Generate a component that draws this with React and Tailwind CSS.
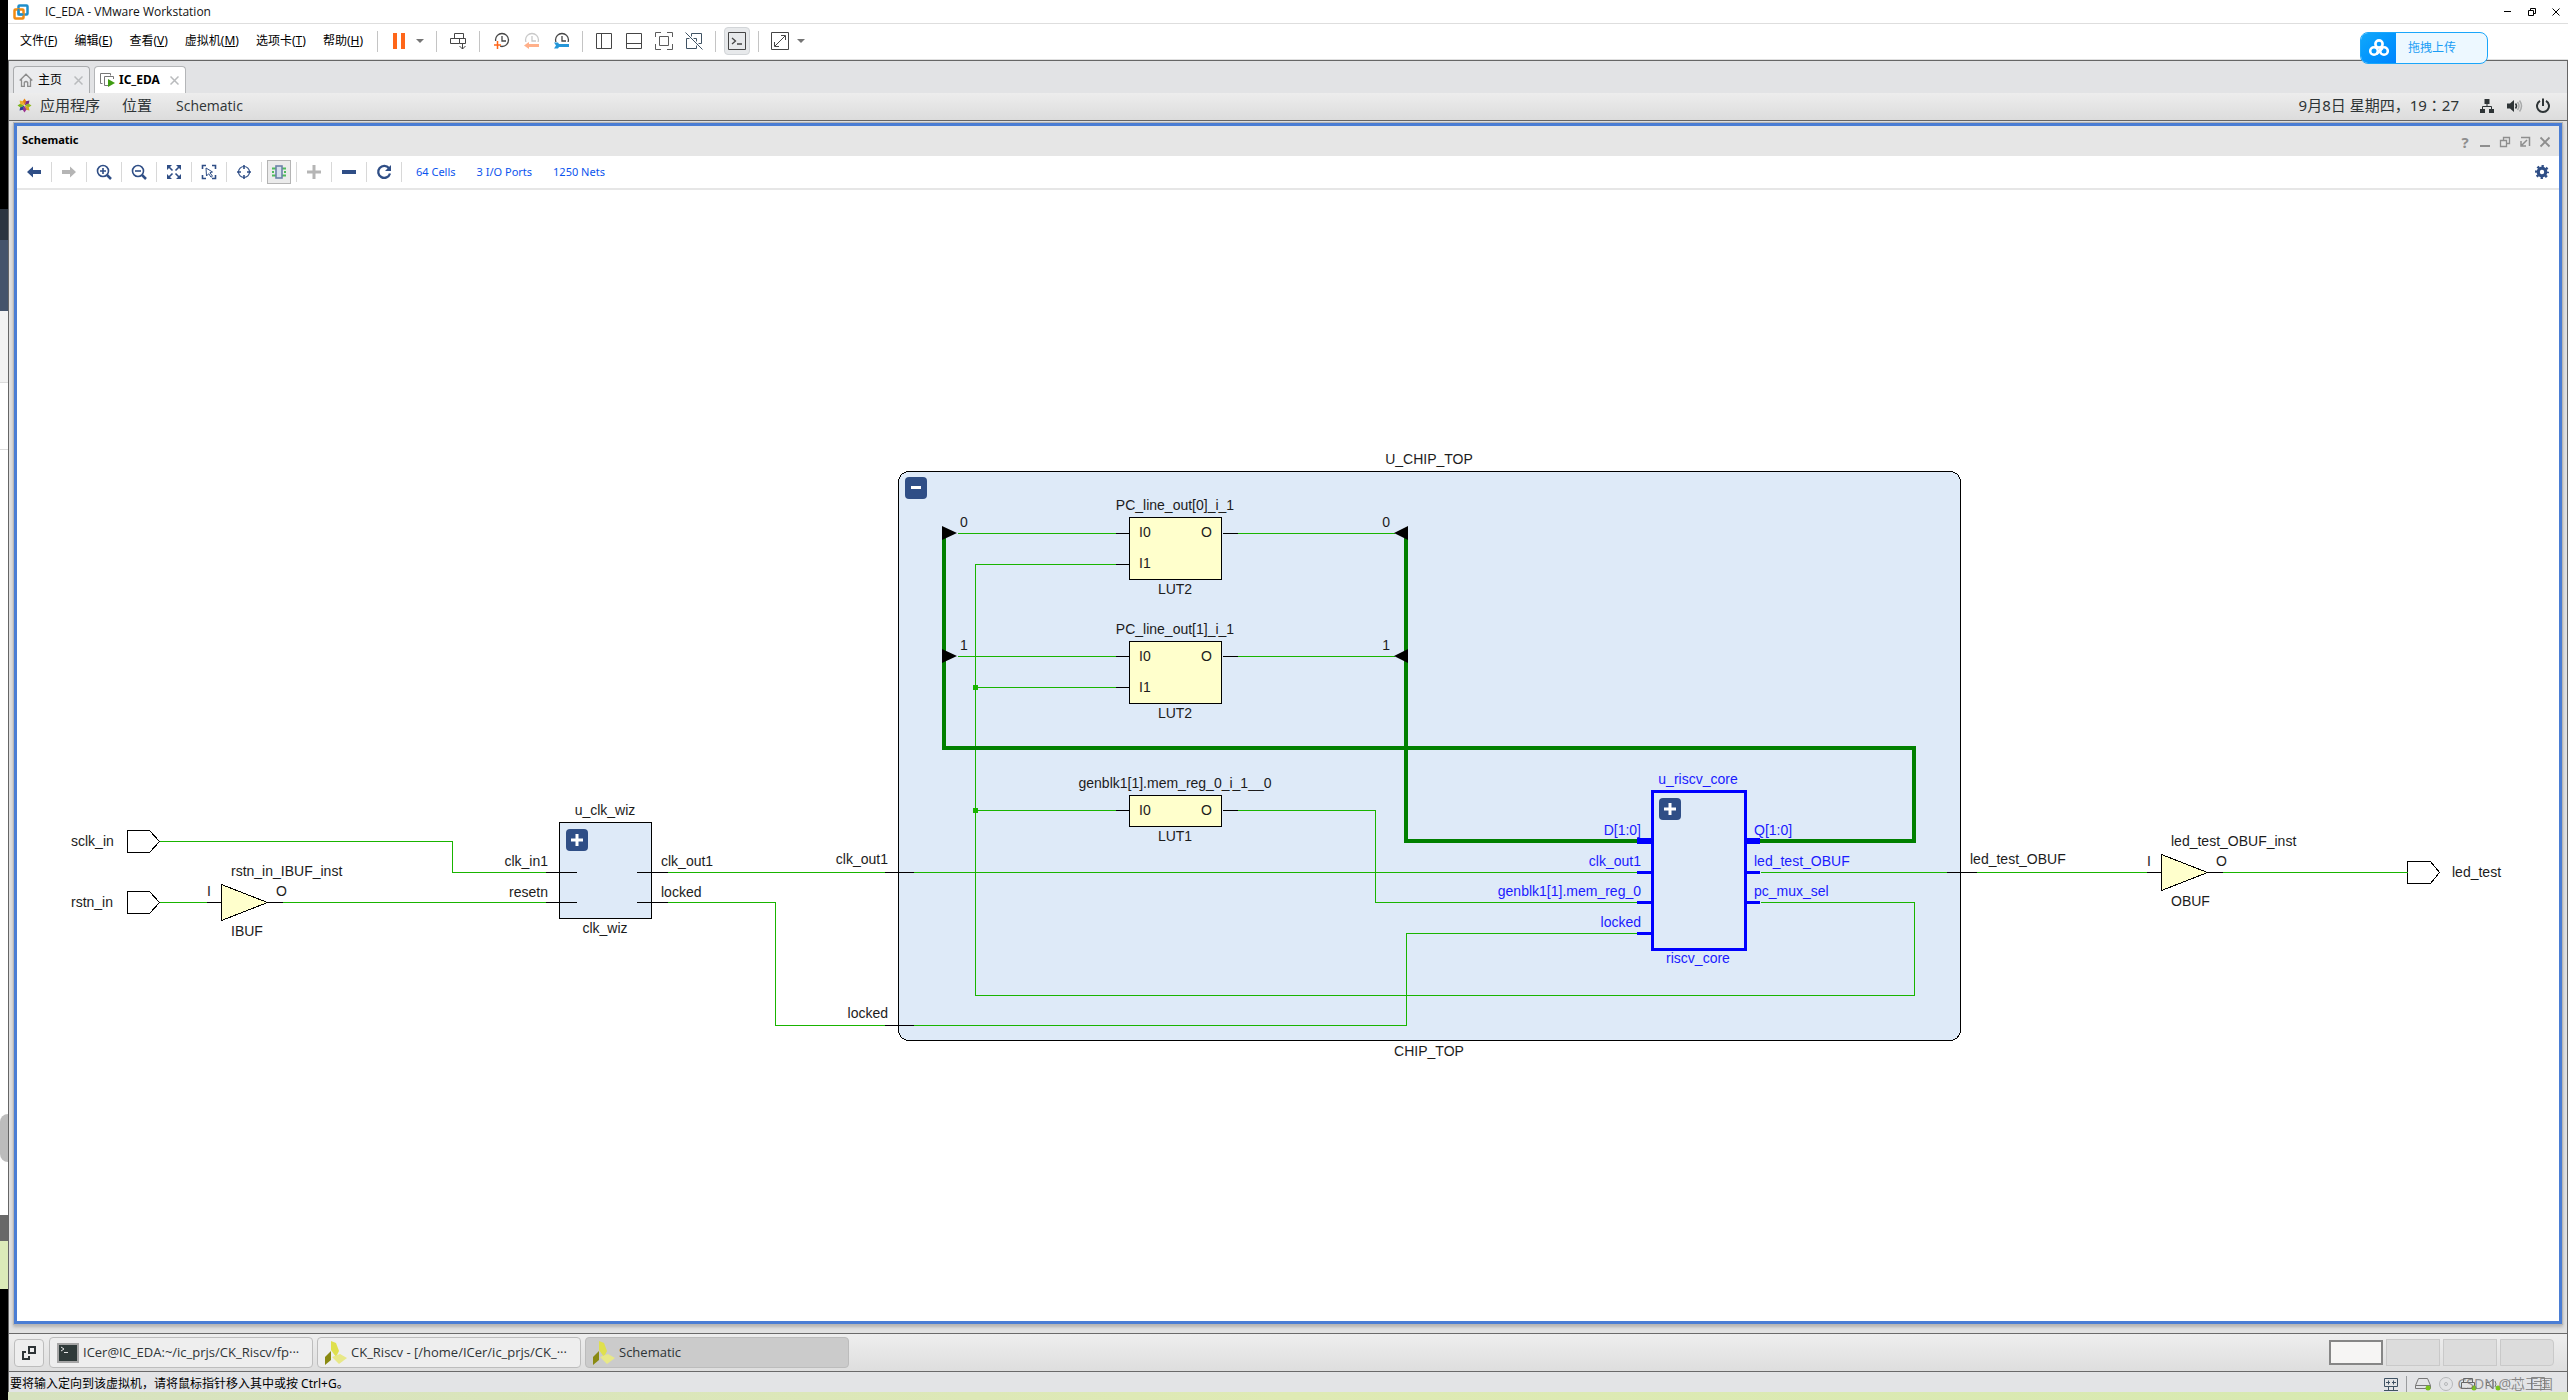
import React from "react";

const UI = "font-['Noto_Sans','Noto_Sans_CJK_SC',sans-serif]";
const NAVY = "#2f4e86";

/* ---------- VMware menu and toolbar ---------- */

const menus = [
  ["文件", "F"],
  ["编辑", "E"],
  ["查看", "V"],
  ["虚拟机", "M"],
  ["选项卡", "T"],
  ["帮助", "H"],
];

function Icon({ w = 18, h = 18, children, ...rest }) {
  return (
    <svg width={w} height={h} viewBox={`0 0 ${w} ${h}`} fill="none" stroke="#454545" className="shrink-0" aria-hidden="true" {...rest}>
      {children}
    </svg>
  );
}

function BarSep() {
  return <span className="mx-1.5 h-[21px] w-px shrink-0 bg-[#c4c4c4]" />;
}

function BarButton({ label, children, active }) {
  return (
    <button aria-label={label} className="flex h-8 w-[30px] shrink-0 items-center justify-center">
      <span className={active ? "flex h-7 w-[26px] items-center justify-center rounded border border-[#d2d5d8] bg-[#e7e9eb]" : "flex"}>
        {children}
      </span>
    </button>
  );
}

function Caret() {
  return (
    <button aria-label="展开" className="flex w-3 shrink-0 justify-center">
      <Icon w={8} h={4} stroke="none">
        <path d="M0 0h8L4 4z" fill="#757575" />
      </Icon>
    </button>
  );
}

function ClockFace({ color = "#454545" }) {
  return (
    <>
      <circle cx="10" cy="8" r="6.5" stroke={color} strokeWidth="1.3" />
      <path d="M10 4v5h4" stroke={color} strokeWidth="1.3" />
    </>
  );
}

function VmwareToolbar() {
  return (
    <>
      <BarSep />
      <BarButton label="挂起">
        <Icon w={12} h={16} stroke="none">
          <path d="M0 0h4v16H0zM8 0h4v16H8z" fill="#ff6619" />
        </Icon>
      </BarButton>
      <Caret />
      <span className="w-1" />
      <BarSep />
      <BarButton label="发送 Ctrl+Alt+Del">
        <Icon>
          <path d="M5.500 1.500h9v5h-9zM1.500 6.500h9v5h-9zM10.500 6.500h6v5h-6M13.500 11v6M10.500 14l3 3 3-3" />
        </Icon>
      </BarButton>
      <BarSep />
      <BarButton label="拍摄快照">
        <Icon>
          <ClockFace />
          <path d="M0 9h8v8H0z" fill="#fff" stroke="none" />
          <path d="M5.500 9v8M2 13h7" stroke="#ff6619" strokeWidth="1.500" />
        </Icon>
      </BarButton>
      <BarButton label="恢复快照">
        <Icon>
          <ClockFace color="#c9c9c9" />
          <path d="M1 10h17v8H1z" fill="#fff" stroke="none" />
          <path d="M17 13.500H5" stroke="#ffb08a" strokeWidth="3" />
          <path d="M7 10v7l-5-3.500z" fill="#ffb08a" stroke="none" />
        </Icon>
      </BarButton>
      <BarButton label="管理快照">
        <Icon>
          <ClockFace />
          <path d="M1 10h17v8H1z" fill="#fff" stroke="none" />
          <path d="M6 13.500h11" stroke="#2496d8" strokeWidth="3" />
          <path d="M2 10.500h4l2 3-2 3H2l2-3z" fill="#2496d8" stroke="none" />
        </Icon>
      </BarButton>
      <BarSep />
      <BarButton label="显示库">
        <Icon><path d="M1.500 1.500h15v15h-15zM6.500 1.500v15" /></Icon>
      </BarButton>
      <BarButton label="缩略图栏">
        <Icon><path d="M1.500 1.500h15v15h-15zM1.500 11.500h15" /></Icon>
      </BarButton>
      <BarButton label="全屏">
        <Icon stroke="#5c5c5c"><path d="M4.500 4.500h9v9h-9zM.5 5V.5H6M12 .5h5.500V5M17.500 12v5.500H12M6 17.500H.5V12" /></Icon>
      </BarButton>
      <BarButton label="Unity">
        <Icon stroke="#3f5263">
          <path d="M6.500 6V1.500h10v10H12M1.500 6.500h10v10h-10z" />
          <path d="M.5 .5l17 17" stroke="#fff" strokeWidth="3" />
          <path d="M.5 .5l17 17" />
        </Icon>
      </BarButton>
      <BarSep />
      <BarButton label="控制台" active>
        <Icon><path d="M.5 .5h17v17H.5z" /><path d="M4 6l3.500 3L4 12M9 12h5" strokeWidth="1.300" /></Icon>
      </BarButton>
      <BarSep />
      <BarButton label="拉伸">
        <Icon><path d="M.5 .5h17v17H.5zM10 3.500h4.500V8M8 14.500H3.500V10M4 14L14 4" /></Icon>
      </BarButton>
      <Caret />
    </>
  );
}

function TitleBar() {
  return (
    <header className="flex h-6 items-center border-b border-[#dedede] bg-white pl-[5px] pr-2 text-xs text-[#111]">
      <Icon w={16} h={16}>
        <rect x="5.500" y="1.500" width="9" height="9" rx="1" stroke="#1f8ecb" strokeWidth="2.500" />
        <rect x="1.500" y="5.500" width="9" height="9" rx="1" stroke="#f28b12" strokeWidth="2.500" />
        <path d="M5.500 5v5.500h5" stroke="#1f8ecb" strokeWidth="2" />
      </Icon>
      <h1 className="ml-4 font-['Open_Sans',sans-serif]">IC_EDA - VMware Workstation</h1>
      <div className="ml-auto flex gap-4">
        <button aria-label="最小化"><Icon w={8} h={8} stroke="#000"><path d="M0 3.500h7" /></Icon></button>
        <button aria-label="还原"><Icon w={8} h={8} stroke="#000"><path d="M.5 2.500h5v5h-5zM2.500 2V.5h5v5H6" /></Icon></button>
        <button aria-label="关闭"><Icon w={8} h={8} stroke="#000"><path d="M.5 .5l7 7M7.500 .5l-7 7" /></Icon></button>
      </div>
    </header>
  );
}

function UploadWidget() {
  return (
    <button className="absolute right-20 top-2 flex h-8 w-32 overflow-hidden rounded-lg border border-[#1aa6fa] bg-[#edf8ff] text-xs text-[#1a9df5]">
      <span className="flex h-full w-[35px] items-center justify-center bg-linear-to-br from-[#12a8fb] to-[#0084ff]">
        <Icon w={20} h={18} stroke="#fff" strokeWidth="2.600">
          <circle cx="10" cy="5" r="3.600" />
          <circle cx="5" cy="12" r="3.800" />
          <circle cx="15" cy="12" r="3.800" />
          <path d="M7.500 15l6-6" />
        </Icon>
      </span>
      <span className="ml-3 self-center">拖拽上传</span>
    </button>
  );
}

function TabClose() {
  return (
    <button aria-label="关闭选项卡" className="ml-auto">
      <Icon w={9} h={9} stroke="#b9bbbd" strokeWidth="1.500"><path d="M.5 .5l8 8M8.500 .5l-8 8" /></Icon>
    </button>
  );
}

function VmTabs() {
  return (
    <nav className="flex h-8 items-end gap-1 bg-[#e2e3e5] pl-1 text-xs text-black">
      <div className="flex h-[27px] w-[77px] items-center rounded-t border border-b-0 border-[#a9abad] bg-[#ebecee] pl-[5px] pr-1.5">
        <Icon w={14} h={14} stroke="#8c8c8c" strokeWidth="1.300">
          <path d="M.7 7.500L7 1.200l6.300 6.300M2.500 6v7.300h2.800V9.500q1.700-2 3.400 0v3.800h2.800V6" />
        </Icon>
        <button className="ml-[5px]">主页</button>
        <TabClose />
      </div>
      <div className="flex h-[27px] w-[92px] items-center rounded-t border border-b-0 border-[#b4b6b8] bg-white pl-[5px] pr-1.5">
        <Icon w={15} h={14} stroke="#777">
          <path d="M2.500 10.500h-2V.5h10v2M9 12.500H4.500v-9h9V6" />
          <path d="M8 6l7 4-7 4z" fill="#3f9c12" stroke="none" />
        </Icon>
        <button className="ml-1 font-bold">IC_EDA</button>
        <TabClose />
      </div>
    </nav>
  );
}

/* ---------- GNOME panel ---------- */

const petals = ["#e8820e", "#7a2a85", "#93b922", "#d6a51f", "#9a3090", "#2d3f92", "#7ab51d", "#edae2f"];

function GnomePanel() {
  return (
    <div className="flex h-[27px] items-center bg-linear-to-b from-[#ededed] to-[#dcdcdc] pb-0.5 pl-2 pr-4 text-[15px] text-[#2e3436]">
      <Icon w={15} h={15} stroke="none">
        {petals.map((c, i) => (
          <path key={c} d="M7.500 7L5.500 3.500 7.500 .5l2 3z" fill={c} transform={`rotate(${i * 45} 7.500 7.500)`} />
        ))}
      </Icon>
      <button className="ml-2">应用程序</button>
      <button className="ml-[22px]">位置</button>
      <button className="ml-6 font-['Open_Sans',sans-serif] text-sm">Schematic</button>
      <time className="ml-auto font-['Noto_Sans','Noto_Sans_CJK_JP',sans-serif]">9月8日 星期四，19：27</time>
      <div className="ml-5 flex gap-3">
        <button aria-label="网络">
          <Icon w={16} h={16} stroke="#2e3436">
            <path d="M5.500 1h5v5h-5zM1 11h5v4H1zM10 11h5v4h-5z" fill="#2e3436" stroke="none" />
            <path d="M8 6v2.500M3.500 11V8.500h9V11" />
          </Icon>
        </button>
        <button aria-label="音量">
          <Icon w={16} h={16} stroke="#2e3436">
            <path d="M0 5.500h3L7 2v12l-4-3.500H0z" fill="#2e3436" stroke="none" />
            <path d="M8.500 5.500q2 2.500 0 5" strokeWidth="1.500" />
            <path d="M10.500 4q3 4 0 8M12.500 2.500q4 5.500 0 11" stroke="#a8aaaa" strokeWidth="1.500" />
          </Icon>
        </button>
        <button aria-label="电源">
          <Icon w={16} h={16} stroke="#2e3436" strokeWidth="2">
            <path d="M5 2.800a6 6 0 1 0 6 0M8 .5V8" />
          </Icon>
        </button>
      </div>
    </div>
  );
}

/* ---------- Schematic window ---------- */

function ToolCell({ label, children, active }) {
  return (
    <button aria-label={label} className="flex h-5 w-[35px] items-center justify-center border-r border-[#d8d8d8]">
      <span className={active ? "flex h-6 w-6 shrink-0 items-center justify-center border border-[#b4b4b4] bg-[#ebebeb]" : "flex"}>
        <Icon w={16} h={16} stroke={NAVY} strokeWidth="1.600">{children}</Icon>
      </span>
    </button>
  );
}

function SchematicToolbar() {
  return (
    <div className="flex h-[34px] items-center border-b-2 border-[#e6e6e6] bg-white pr-2.5 text-[11px] text-[#0a54ee]">
      <ToolCell label="Back"><path d="M1 8l6-5.500v3.500h8v4H7v3.500z" fill={NAVY} stroke="none" /></ToolCell>
      <ToolCell label="Forward"><path d="M15 8L9 2.500V6H1v4h8v3.500z" fill="#b5b5b5" stroke="none" /></ToolCell>
      <ToolCell label="Zoom in">
        <circle cx="7" cy="7" r="5.500" /><path d="M4 7h6M7 4v6" /><path d="M11 11l4 4" strokeWidth="2.500" />
      </ToolCell>
      <ToolCell label="Zoom out">
        <circle cx="7" cy="7" r="5.500" /><path d="M4 7h6" /><path d="M11 11l4 4" strokeWidth="2.500" />
      </ToolCell>
      <ToolCell label="Zoom fit">
        <path d="M1 1h5L1 6zM15 1v5l-5-5zM15 15h-5l5-5zM1 15v-5l5 5z" fill={NAVY} stroke="none" />
        <path d="M2 2l4.500 4.500M14 2L9.500 6.500M14 14L9.500 9.500M2 14l4.500-4.500" />
      </ToolCell>
      <ToolCell label="Zoom to selection">
        <path d="M1.500 5V1.500H5M11 1.500h3.500V5M14.500 11v3.500H11M5 14.500H1.500V11" />
        <path d="M5 4l6.500 4-2.500 .7 2.500 3.500-1.500 1-2.300-3.500L5.500 12z" strokeWidth="1" />
      </ToolCell>
      <ToolCell label="Center">
        <circle cx="8" cy="8" r="5.500" strokeWidth="1.200" />
        <path d="M8 1v4M8 11v4M1 8h4M11 8h4" strokeWidth="1.600" />
      </ToolCell>
      <ToolCell label="Autofit selection" active>
        <path d="M1 4.500h4M1 8h2M1 11.500h4M11 4.500h4M13 8h2M11 11.500h4" stroke="#4ebc5c" strokeWidth="2" />
        <rect x="5" y="2" width="6" height="12" fill="#d7dfec" stroke="#6c82a8" />
      </ToolCell>
      <ToolCell label="Expand"><path d="M8 1v14M1 8h14" stroke="#b5b5b5" strokeWidth="3" /></ToolCell>
      <ToolCell label="Collapse"><path d="M1 8h14" strokeWidth="4" /></ToolCell>
      <ToolCell label="Regenerate">
        <path d="M13 4.200A6 6 0 1 0 14 9.500" strokeWidth="2.300" /><path d="M15 1v6H9z" fill={NAVY} stroke="none" />
      </ToolCell>
      <div className="ml-3.5 flex gap-[21px]">
        <a href="#cells">64 Cells</a>
        <a href="#ports">3 I/O Ports</a>
        <a href="#nets">1250 Nets</a>
      </div>
      <button aria-label="Settings" className="ml-auto">
        <Icon w={14} h={14} stroke={NAVY}>
          <circle cx="7" cy="7" r="3.800" strokeWidth="3.200" />
          <circle cx="7" cy="7" r="5.900" strokeWidth="2.200" strokeDasharray="2.317 2.317" strokeDashoffset="1.150" />
        </Icon>
      </button>
    </div>
  );
}

function WindowHeader() {
  return (
    <div className="flex h-[30px] items-center bg-[#e6e6e6] pb-0.5 pl-[5px] pr-2 text-[11px] text-black">
      <h2 className="font-bold">Schematic</h2>
      <div className="ml-auto flex gap-2 pt-1">
        <button aria-label="Help" className="w-3 text-[15px] font-bold leading-3 text-[#8e8e8e]">?</button>
        <button aria-label="Minimize"><Icon w={12} h={12} stroke="#8e8e8e"><path d="M1 10h10" strokeWidth="2" /></Icon></button>
        <button aria-label="Restore"><Icon w={12} h={12} stroke="#8e8e8e" strokeWidth="1.300"><path d="M1.500 4.500h6v6h-6zM4.500 4V1.500h6v6H8" /></Icon></button>
        <button aria-label="Float"><Icon w={12} h={12} stroke="#8e8e8e" strokeWidth="1.500"><path d="M2 1.500h8.500V10M8 4L3 9M2 5v5h5" /></Icon></button>
        <button aria-label="Close"><Icon w={12} h={12} stroke="#8e8e8e" strokeWidth="1.800"><path d="M1.500 1.500l9 9M10.500 1.500l-9 9" /></Icon></button>
      </div>
    </div>
  );
}

const nets = [
  "M159 841H452V872H545",
  "M159 902H206",
  "M282 902H545",
  "M667 872H884",
  "M667 902H775V1025H884",
  "M913 872H1637",
  "M913 1025H1406V933H1637",
  "M957 533H1115",
  "M957 656H1115",
  "M1115 564H975V995H1914V902H1760",
  "M975 687H1115",
  "M975 810H1115",
  "M1237 533H1394",
  "M1237 656H1394",
  "M1237 810H1375V902H1637",
  "M1760 872H1946",
  "M1976 872H2146",
  "M2222 872H2407",
];

const pins = [
  "M206 902H221M267 902H282",
  "M545 872H576M545 902H576M636 872H667M636 902H667",
  "M884 872H913M884 1025H913",
  "M1115 533H1129M1115 564H1129M1222 533H1237",
  "M1115 656H1129M1115 687H1129M1222 656H1237",
  "M1115 810H1129M1222 810H1237",
  "M1946 872H1976M2146 872H2161M2207 872H2222",
];

/* x, baseline, text, anchor */
const labels = [
  [71, 846, "sclk_in"],
  [71, 907, "rstn_in"],
  [231, 876, "rstn_in_IBUF_inst"],
  [207, 896, "I"],
  [276, 896, "O"],
  [231, 936, "IBUF"],
  [548, 866, "clk_in1", "end"],
  [548, 897, "resetn", "end"],
  [605, 815, "u_clk_wiz", "middle"],
  [605, 933, "clk_wiz", "middle"],
  [661, 866, "clk_out1"],
  [661, 897, "locked"],
  [888, 864, "clk_out1", "end"],
  [888, 1018, "locked", "end"],
  [1429, 464, "U_CHIP_TOP", "middle"],
  [1429, 1056, "CHIP_TOP", "middle"],
  [1175, 510, "PC_line_out[0]_i_1", "middle"],
  [1175, 594, "LUT2", "middle"],
  [1175, 634, "PC_line_out[1]_i_1", "middle"],
  [1175, 718, "LUT2", "middle"],
  [1175, 788, "genblk1[1].mem_reg_0_i_1__0", "middle"],
  [1175, 841, "LUT1", "middle"],
  [1139, 537, "I0"],
  [1139, 568, "I1"],
  [1212, 537, "O", "end"],
  [1139, 661, "I0"],
  [1139, 692, "I1"],
  [1212, 661, "O", "end"],
  [1139, 815, "I0"],
  [1212, 815, "O", "end"],
  [960, 527, "0"],
  [960, 650, "1"],
  [1390, 527, "0", "end"],
  [1390, 650, "1", "end"],
  [1970, 864, "led_test_OBUF"],
  [2147, 866, "I"],
  [2216, 866, "O"],
  [2171, 846, "led_test_OBUF_inst"],
  [2171, 906, "OBUF"],
  [2452, 877, "led_test"],
];

const coreLabels = [
  [1698, 784, "u_riscv_core", "middle"],
  [1698, 963, "riscv_core", "middle"],
  [1641, 835, "D[1:0]", "end"],
  [1641, 866, "clk_out1", "end"],
  [1641, 896, "genblk1[1].mem_reg_0", "end"],
  [1641, 927, "locked", "end"],
  [1754, 835, "Q[1:0]"],
  [1754, 866, "led_test_OBUF"],
  [1754, 896, "pc_mux_sel"],
];

function Labels({ items, fill }) {
  return (
    <g fill={fill}>
      {items.map(([x, y, text, anchor]) => (
        <text key={`${x}-${y}`} x={x} y={y} textAnchor={anchor || "start"}>{text}</text>
      ))}
    </g>
  );
}

function ExpandButton({ className, label, minus }) {
  return (
    <button aria-label={label} className={`absolute flex h-[22px] w-[22px] items-center justify-center rounded-sm bg-[#2f4e86] ${className}`}>
      <Icon w={12} h={12} stroke="#fff" strokeWidth="3">
        <path d={minus ? "M1 5.500h10" : "M0 6h12M6 0v12"} />
      </Icon>
    </button>
  );
}

function SchematicCanvas() {
  return (
    <main className="relative min-h-0 flex-1 overflow-hidden bg-white">
      <svg className="block h-full w-full font-['Liberation_Sans',sans-serif] text-sm" role="img" aria-label="Schematic">
        <g transform="translate(-17 -190)">
          <g transform="translate(.5 .5)" shapeRendering="crispEdges" fill="none">
            <g stroke="#000">
              <path d="M906 471H1952L1957 474 1960 479V1032L1957 1037 1952 1040H906L901 1037 898 1032V479L901 474Z" fill="#deeaf8" />
              <rect x="559" y="822" width="92" height="96" fill="#deeaf8" />
              <path d="M127 830H149L159 841 149 852H127ZM127 891H149L159 902 149 913H127ZM2407 861H2430L2439 872 2430 883H2407Z" fill="#fff" />
              <path d="M221 884L267 902 221 920ZM2161 854L2207 872 2161 890Z" fill="#ffffcc" />
              <path d="M1129 517h92v62h-92zM1129 641h92v62h-92zM1129 795h92v31h-92z" fill="#ffffcc" />
            </g>
            <g stroke="#19b400">
              {nets.map((d) => <path key={d} d={d} />)}
            </g>
            <path d="M972 684h5v5h-5zM972 807h5v5h-5z" fill="#19b400" />
            <g stroke="#000">
              {pins.map((d) => <path key={d} d={d} />)}
            </g>
          </g>
          <g shapeRendering="crispEdges" fill="none">
            <path d="M944 533V748H1914V841H1760M1406 533V841H1637" stroke="#008000" strokeWidth="4" />
            <path d="M1652 791H1745V949H1652Z" stroke="#0000ff" strokeWidth="3" />
            <path d="M1637 841h15M1745 841h15" stroke="#0000ff" strokeWidth="6" />
            <path d="M1637 872h15M1637 902h15M1637 933h15M1745 872h15M1745 902h15" stroke="#0000ff" strokeWidth="3" />
          </g>
          <path d="M942 526V540L957 533ZM942 649V663L957 656ZM1408 526V540L1394 533ZM1408 649V663L1394 656Z" fill="#000" />
          <Labels items={labels} fill="#1c1c1c" />
          <Labels items={coreLabels} fill="#1a1aff" />
        </g>
      </svg>
      <ExpandButton className="left-[549px] top-[639px]" label="Expand u_clk_wiz" />
      <ExpandButton className="left-[888px] top-[287px]" label="Collapse U_CHIP_TOP" minus />
      <ExpandButton className="left-[1642px] top-[608px]" label="Expand u_riscv_core" />
    </main>
  );
}

/* ---------- Guest taskbar and host status bar ---------- */

function VivadoIcon() {
  return (
    <Icon w={22} h={24} stroke="none">
      <path d="M6 0l5 2 3 8-3 6-5-7z" fill="#dfe04d" />
      <path d="M0 16l6-6v9l-6 5z" fill="#8a8a12" />
      <path d="M7 16l8-3 7 4-8 6z" fill="#e8e887" />
    </Icon>
  );
}

function Task({ icon, children, active }) {
  return (
    <button
      className={`flex h-[31px] w-[264px] items-center gap-1 rounded border pl-[7px] font-['Open_Sans',sans-serif] text-[13px] text-[#2e3436] ${
        active ? "border-[#bcbcbc] bg-[#cbcbcb]" : "border-[#bdbdbd] bg-[#eeeeee]"
      }`}
    >
      {icon}
      <span className="whitespace-nowrap">{children}</span>
    </button>
  );
}

function Taskbar() {
  return (
    <div className="flex h-[39px] items-center gap-1 border-y border-[#6a6a6a] bg-linear-to-b from-[#eeeeee] to-[#dedede] pl-[5px] pr-[13px]">
      <button aria-label="显示桌面" className="mr-px flex h-7 w-[30px] items-center justify-center rounded border border-[#bdbdbd] bg-[#eeeeee]">
        <Icon w={14} h={14} stroke="#2e3436" strokeWidth="2">
          <path d="M7 1h6v6H7zM4 6H1v7h6v-3" />
        </Icon>
      </button>
      <Task
        icon={
          <Icon w={22} h={20} stroke="none">
            <rect width="22" height="20" fill="#a5a5a5" />
            <rect x="2" y="2" width="18" height="16" fill="#2f3a39" />
            <path d="M4 4l3 2-3 2M7 9.500h4" stroke="#e6e6e6" />
          </Icon>
        }
      >
        ICer@IC_EDA:~/ic_prjs/CK_Riscv/fp···
      </Task>
      <Task icon={<VivadoIcon />}>CK_Riscv - [/home/ICer/ic_prjs/CK_···</Task>
      <Task icon={<VivadoIcon />} active>Schematic</Task>
      <div className="ml-auto flex items-center gap-[3px]">
        <button aria-label="工作区 1" className="h-[25px] w-[54px] border-2 border-[#868686] bg-[#f6f5f4]" />
        <button aria-label="工作区 2" className="h-[27px] w-[54px] border border-[#c9c9c9] bg-[#dcdcdc]" />
        <button aria-label="工作区 3" className="h-[27px] w-[54px] border border-[#c9c9c9] bg-[#dcdcdc]" />
        <button aria-label="工作区 4" className="h-[27px] w-[54px] rounded-r border border-[#c9c9c9] bg-[#dcdcdc]" />
      </div>
    </div>
  );
}

function StatusBar() {
  return (
    <footer className="relative flex h-5 items-center bg-[#e3e4e6] pr-[22px] pt-1 text-xs text-black">
      <p className="pl-px">要将输入定向到该虚拟机，请将鼠标指针移入其中或按 Ctrl+G。</p>
      <div className="ml-auto flex items-center gap-2">
        <Icon w={14} h={13} stroke="#3f5263"><path d="M.5 .5h13v8H.5zM2 4.500h4M4.500 2.500v4M12 4.500H8M9.500 2.500v4M4.500 9v3M9.500 9v3M0 12.500h14" /></Icon>
        <span className="h-4 w-px bg-[#9a9c9e]" />
        <Icon w={16} h={14} stroke="#777"><path d="M3.500 1.500h9l3 7v3H.5v-3zM.5 8.500h15" /><circle cx="13" cy="11" r="2.500" fill="#7ac31c" stroke="none" /></Icon>
        <Icon w={14} h={14} stroke="#b5b7b9"><circle cx="7" cy="7" r="6.500" /><circle cx="7" cy="7" r="1.500" /></Icon>
        <Icon w={16} h={14} stroke="#666"><path d="M2.500 6V1.500h9V6M.5 5.500h13v6H.5z" /><circle cx="13" cy="11" r="2.500" fill="#7ac31c" stroke="none" /></Icon>
        <Icon w={16} h={14} stroke="#777"><path d="M1.500 5.500H4l4-3v9l-4-3H1.500zM10 4q2 3 0 6" /><circle cx="13" cy="11" r="2.500" fill="#7ac31c" stroke="none" /></Icon>
        <Icon w={14} h={14} stroke="#bbb"><path d="M.5 2.500h13v9H.5z" /></Icon>
        <Icon w={14} h={14} stroke="#888"><path d="M.5 .5h13v12H.5zM3 4.500h8M3 8.500h8" /></Icon>
      </div>
      <span className="absolute right-3.5 top-0.5 text-sm leading-5 text-[#777777cc]">CSDN @芯王国</span>
    </footer>
  );
}

/* Sliver of the window behind, visible along the left edge. */
function BackgroundStrip() {
  return (
    <aside className="flex w-2 shrink-0 flex-col overflow-hidden bg-black">
      <div className="h-[209px] shrink-0" />
      <div className="h-[31px] shrink-0 bg-[#2c3540]" />
      <div className="h-[71px] shrink-0 bg-[#45546b]" />
      <div className="h-[72px] shrink-0 border-b border-[#dcdcdc] bg-[#f2f2f2]" />
      <div className="h-[67px] shrink-0 border-b border-[#dcdcdc] bg-white" />
      <div className="flex min-h-0 flex-1 flex-col justify-end bg-white pb-[53px]">
        <div className="h-12 w-4 rounded-full bg-[#bcbcbc]" />
      </div>
      <div className="h-[26px] shrink-0 bg-[#686868]" />
      <div className="h-12 shrink-0 bg-[#dcebb9]" />
      <div className="h-[111px] shrink-0" />
    </aside>
  );
}

export default function App() {
  return (
    <div className={`flex h-screen overflow-hidden ${UI}`}>
      <BackgroundStrip />
      <div className="flex min-w-0 flex-1 flex-col">
        <TitleBar />
        <div className="relative flex h-9 items-center border-b border-[#e0e0e0] bg-white pb-px pl-3 text-xs text-black">
          <nav className="mr-2 flex gap-[17px] pb-px">
            {menus.map(([name, key]) => (
              <button key={key} className="whitespace-nowrap">{name}(<u>{key}</u>)</button>
            ))}
          </nav>
          <VmwareToolbar />
          <UploadWidget />
        </div>
        <div className="flex min-h-0 flex-1 flex-col border-x border-t border-[#666]">
          <VmTabs />
          <GnomePanel />
          <div className="flex min-h-0 flex-1 flex-col border-t border-[#666] bg-[#e2e2e2] px-1 pb-2 pt-px">
            <section className="flex min-h-0 flex-1 flex-col border border-[#b6b6b6] bg-white shadow-[0_2px_3px_#8888]">
              <div className="flex min-h-0 flex-1 flex-col border-3 border-[#4a7dd4]">
                <WindowHeader />
                <SchematicToolbar />
                <SchematicCanvas />
              </div>
            </section>
          </div>
          <Taskbar />
          <StatusBar />
        </div>
        <div className="h-2 shrink-0 bg-linear-to-r from-[#d7e2c0] via-[#dfeab4] to-[#d6e9b0]" />
      </div>
    </div>
  );
}
